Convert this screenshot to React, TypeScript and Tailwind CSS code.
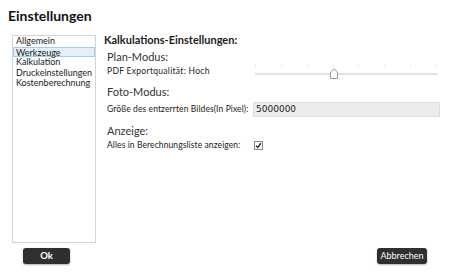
export default function App() {
  const items = ["Allgemein", "Werkzeuge", "Kalkulation", "Druckeinstellungen", "Kostenberechnung"];
  return (
    <div
      className="w-[456px] h-[277px] bg-white flex flex-col text-[#222]"
      style={{ fontFamily: "Lato, 'Noto Sans', sans-serif" }}
    >
      <h1 className="m-0 pl-[8px] pt-[7px] h-[35px] text-[14px] font-bold leading-[17px] text-[#111]">Einstellungen</h1>
      <div className="flex">
        <div className="ml-[12px] w-[84px] h-[208px] border border-[#d4d4d4]">
          {items.map((it) => (
            <div
              key={it}
              className={
                it === "Werkzeuge"
                  ? "h-[10.5px] leading-[9px] pl-[2px] text-[9px] bg-[#e3f0fa] border border-[#a9cde8]"
                  : "h-[10.5px] leading-[10px] pl-[3px] text-[9px]"
              }
            >
              {it}
            </div>
          ))}
        </div>
        <div className="ml-[8px] flex-1 pr-[16px]">
          <div className="text-[11px] font-bold leading-[12px] mt-[-1px]">Kalkulations-Einstellungen:</div>
          <div className="pl-[3px]">
            <div className="text-[11px] leading-[14px] mt-[4px] text-[#333]">Plan-Modus:</div>
            <div className="flex items-center h-[14px]">
              <span className="text-[8.5px] tracking-[0.3px] w-[148px] shrink-0">PDF Exportqualität: Hoch</span>
              <div className="relative flex-1 h-[14px]">
                <div className="absolute left-0 right-[2px] top-[9px] h-[2px] bg-[#e2e2e2]" />
                {[0, 1, 2, 3, 4, 5, 6, 7].map((i) => (
                  <div
                    key={i}
                    className="absolute top-[1px] w-[1px] h-[2px] bg-[#e4e4e4]"
                    style={{ left: `${(i / 7) * 181}px` }}
                  />
                ))}
                <svg className="absolute left-[75px] top-[4px]" width="8" height="11" viewBox="0 0 8 11">
                  <path d="M0.5 10.5V4L4 0.8L7.5 4V10.5Z" fill="#fafafa" stroke="#9a9a9a" strokeWidth="1" />
                </svg>
              </div>
            </div>
            <div className="text-[11px] leading-[14px] mt-[7px] text-[#333]">Foto-Modus:</div>
            <div className="flex items-center mt-[3px]">
              <span className="text-[8.5px] tracking-[0.1px] w-[146px] shrink-0">Größe des entzerrten Bildes(In Pixel):</span>
              <div
                className="flex-1 h-[15px] bg-[#ececec] border border-[#dcdcdc] text-[9px] leading-[13px] pl-[2px] text-[#222]"
                style={{ fontFamily: "'DejaVu Sans', sans-serif" }}
              >
                5000000
              </div>
            </div>
            <div className="text-[11px] leading-[14px] mt-[7px] text-[#333]">Anzeige:</div>
            <div className="flex items-center mt-[2px] h-[10px]">
              <span className="text-[8.5px] tracking-[0.1px] w-[147px] shrink-0">Alles in Berechnungsliste anzeigen:</span>
              <svg width="9" height="9" viewBox="0 0 9 9">
                <rect x="0.5" y="0.5" width="8" height="8" fill="#fff" stroke="#8a8a8a" />
                <path d="M2 4.6L3.7 6.4L7 2.2" fill="none" stroke="#222" strokeWidth="1.3" />
              </svg>
            </div>
          </div>
        </div>
      </div>
      <div className="flex justify-between mt-[5px] pl-[23px] pr-[29px]">
        <button className="w-[47px] h-[16px] rounded-[3px] bg-[#2f2f2f] text-white text-[9.5px] font-bold leading-[16px] shadow-[0_1px_2px_rgba(0,0,0,0.3)]">
          Ok
        </button>
        <button className="w-[50px] h-[16px] rounded-[3px] bg-[#2f2f2f] text-white text-[9px] leading-[16px] shadow-[0_1px_2px_rgba(0,0,0,0.3)]">
          Abbrechen
        </button>
      </div>
    </div>
  );
}
